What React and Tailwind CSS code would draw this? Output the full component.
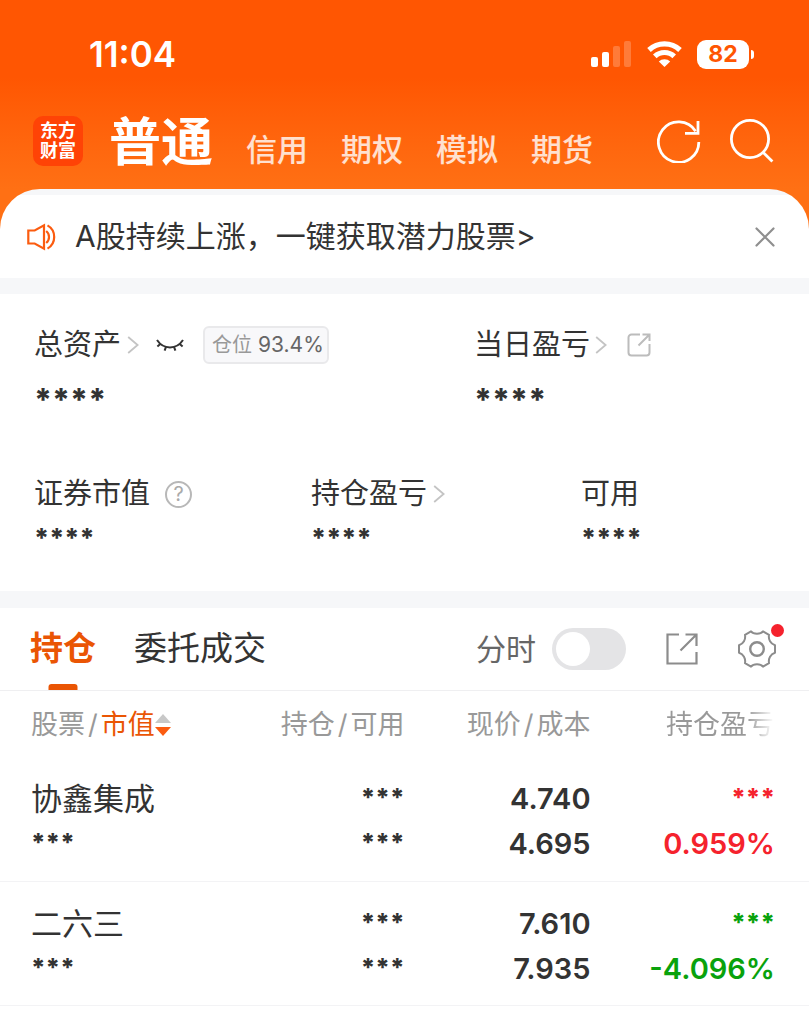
import { useState } from "react";

const ACCOUNT_TABS = ["信用", "期权", "模拟", "期货"];

const HOLDINGS = [
  { name: "协鑫集成", price: "4.740", cost: "4.695", rate: "0.959%", up: true },
  { name: "二六三", price: "7.610", cost: "7.935", rate: "-4.096%", up: false },
];

function SignalIcon() {
  return (
    <svg viewBox="0 0 42 27" className="h-[27px] w-[42px]" fill="#fff" aria-hidden="true">
      <rect x="1" y="16" width="7" height="10" rx="2" />
      <rect x="12" y="11" width="7" height="15" rx="2" />
      <rect x="23" y="5" width="7" height="21" rx="2" opacity=".22" />
      <rect x="34" y="0" width="7" height="26" rx="2" opacity=".22" />
    </svg>
  );
}

function WifiIcon() {
  return (
    <svg viewBox="0 0 35 26" className="h-[26px] w-[35px]" fill="none" stroke="#fff" strokeWidth="5.2" aria-hidden="true">
      <path d="M2 9A22.6 22.6 0 0 1 33 9" />
      <path d="M7.8 15.4A14 14 0 0 1 27.2 15.4" />
      <path d="M17.5 26L11.8 20.6A8 8 0 0 1 23.2 20.6Z" fill="#fff" stroke="none" />
    </svg>
  );
}

function RefreshIcon() {
  return (
    <svg viewBox="0 0 44 44" className="size-[44px]" fill="none" stroke="currentColor" strokeWidth="2.8" aria-hidden="true">
      <path d="M41.8 23A20.2 20.2 0 1 1 38.6 12.2" />
      <path d="M41 2v12.3H28" />
    </svg>
  );
}

function SearchIcon() {
  return (
    <svg viewBox="0 0 44 44" className="size-[44px]" fill="none" stroke="currentColor" strokeWidth="2.8" aria-hidden="true">
      <circle cx="20" cy="20" r="18.6" />
      <path d="M33 33.2l9.4 9.4" />
    </svg>
  );
}

function SpeakerIcon() {
  return (
    <svg viewBox="0 0 30 28" className="h-[28px] w-[30px]" fill="none" stroke="#fb5c10" strokeWidth="2.2" aria-hidden="true">
      <path d="M1.3 7.5h6.4L17 2.4v23.2l-9.3-5.1H1.3z" />
      <path d="M19.2 8a7.8 7.8 0 0 1 0 12" />
      <path d="M20.5 2.4a13.4 13.4 0 0 1 0 23.2" />
    </svg>
  );
}

function CloseIcon() {
  return (
    <svg viewBox="0 0 20 20" className="size-5" fill="none" stroke="#8f8f8f" strokeWidth="2.2" strokeLinecap="round" aria-hidden="true">
      <path d="M1.5 1.5l17 17M18.5 1.5l-17 17" />
    </svg>
  );
}

function ChevronIcon() {
  return (
    <svg viewBox="0 0 12 18" className="h-[18px] w-3" fill="none" stroke="#c4c4c4" strokeWidth="1.8" aria-hidden="true">
      <path d="M1.2 1l9.4 8-9.4 8" />
    </svg>
  );
}

function ClosedEyeIcon() {
  return (
    <svg viewBox="0 0 28 16" className="h-4 w-7" fill="none" stroke="#333" strokeWidth="2" aria-hidden="true">
      <path d="M1 3c3 4.6 7.6 7.4 13 7.4S24 7.6 27 3" />
      <path d="M4.6 6.8L1.4 9.6M10 9.8l-1.4 3.8M18 9.8l1.4 3.8M23.4 6.8l3.2 2.8" />
    </svg>
  );
}

function RoundedShareIcon() {
  return (
    <svg viewBox="0 0 24 24" className="size-6" fill="none" stroke="#bcbcbc" strokeWidth="2" aria-hidden="true">
      <path d="M13 1.5H4.5a3 3 0 0 0-3 3v15a3 3 0 0 0 3 3h15a3 3 0 0 0 3-3V11" />
      <path d="M15.5 1.5h7v6.5M22 2L11.5 12.5" />
    </svg>
  );
}

function ShareIcon() {
  return (
    <svg viewBox="0 0 32 32" className="size-8" fill="none" stroke="#8c8c8c" strokeWidth="2.2" aria-hidden="true">
      <path d="M13 1.5H1.5v29h29V19" />
      <path d="M19.5 1.5h11V13M30 2L14.5 17.5" />
    </svg>
  );
}

function GearIcon() {
  return (
    <svg viewBox="0 0 38 38" className="size-[38px]" fill="none" stroke="#8c8c8c" strokeWidth="2" strokeLinejoin="round" aria-hidden="true">
      <path d="M13 1.4C15.5 4.4 22.5 4.4 25 1.4L31 4.9C30.2 9.5 32.5 13.8 37 15.2V22.8C32.5 24.2 30.2 28.5 31 33.1L25 36.6C22.5 33.6 15.5 33.6 13 36.6L7 33.1C7.8 28.5 5.5 24.2 1 22.8V15.2C5.5 13.8 7.8 9.5 7 4.9Z" />
      <circle cx="19" cy="19" r="6.8" strokeWidth="2.4" />
    </svg>
  );
}

function SortIcon() {
  return (
    <svg viewBox="0 0 16 22" className="h-[22px] w-4" aria-hidden="true">
      <path d="M8 0l8 9H0z" fill="#c8c8c8" />
      <path d="M8 22l8-9H0z" fill="#fb5c10" />
    </svg>
  );
}

function StatusBar() {
  return (
    <div className="flex h-[108px] items-center justify-between pr-[55px] pl-[89px]">
      <span className="text-[35px] font-semibold">11:04</span>
      <div className="flex items-center gap-[15px]">
        <SignalIcon />
        <WifiIcon />
        <div className="flex items-center gap-[2px]">
          <span className="flex h-[29px] w-[52px] items-center justify-center rounded-[9px] bg-white text-[23px] font-bold text-[#ff5602]">
            82
          </span>
          <span className="h-[9px] w-[3px] rounded-r-full bg-white" />
        </div>
      </div>
    </div>
  );
}

function AccountNav() {
  return (
    <div className="flex h-[81px] items-start justify-between pr-[35px] pl-[33px]">
      <div className="flex items-start">
        <span className="mt-2 flex size-[50px] flex-col items-center justify-center rounded-[10px] bg-[#ff4306] text-[18px] leading-[20px] font-bold">
          <span>东方</span>
          <span>财富</span>
        </span>
        <nav className="ml-[26px] flex items-baseline gap-[33px] text-[31px] font-medium text-white/80">
          <a href="#normal" aria-current="page" className="text-[52px] leading-[70px] font-bold text-white">
            普通
          </a>
          {ACCOUNT_TABS.map((tab) => (
            <a key={tab} href={`#${tab}`}>
              {tab}
            </a>
          ))}
        </nav>
      </div>
      <div className="mt-[11px] flex gap-[29px]">
        <button type="button" aria-label="刷新">
          <RefreshIcon />
        </button>
        <button type="button" aria-label="搜索">
          <SearchIcon />
        </button>
      </div>
    </div>
  );
}

function Notice({ onClose }) {
  return (
    <div className="flex h-[89px] items-center rounded-t-[40px] bg-[linear-gradient(#f6f7f9_6px,#fff_6px)] pt-[6px] pr-[34px] pl-[27px]">
      <SpeakerIcon />
      <a href="#notice" className="ml-[18px] flex-1 text-[30px]">
        A股持续上涨，一键获取潜力股票&gt;
      </a>
      <button type="button" aria-label="关闭" onClick={onClose}>
        <CloseIcon />
      </button>
    </div>
  );
}

function Stat({ label, large, children }) {
  return (
    <div>
      <div className="flex h-[44px] items-center text-[29px]">
        <span>{label}</span>
        {children}
      </div>
      <div className={large ? "text-[31px] leading-[66px] font-extrabold" : "text-[26px] leading-[44px] font-extrabold"}>
        ****
      </div>
    </div>
  );
}

function Assets() {
  return (
    <section className="border-t-[16px] border-b-[17px] border-[#f6f7f9] px-[34px] pt-[29px] pb-[31px]">
      <div className="grid grid-cols-[440fr_301fr]">
        <Stat label="总资产" large>
          <span className="ml-[6px]">
            <ChevronIcon />
          </span>
          <button type="button" aria-label="显示金额" className="ml-[17px]">
            <ClosedEyeIcon />
          </button>
          <span className="ml-[19px] flex h-[38px] items-center gap-[6px] rounded-[6px] border-2 border-[#e9e9eb] bg-[#f8f8fa] pr-[3px] pl-[7px] text-[20px] text-[#999]">
            仓位 <span className="text-[21px] text-[#666]">93.4%</span>
          </span>
        </Stat>
        <Stat label="当日盈亏" large>
          <span className="ml-[5px]">
            <ChevronIcon />
          </span>
          <button type="button" aria-label="分享" className="ml-[20px]">
            <RoundedShareIcon />
          </button>
        </Stat>
      </div>
      <div className="mt-[39px] grid grid-cols-[277fr_270fr_194fr]">
        <Stat label="证券市值">
          <button
            type="button"
            aria-label="说明"
            className="ml-[15px] flex size-[27px] items-center justify-center rounded-full border-2 border-[#b8b8b8] text-[20px] text-[#aaa]"
          >
            ?
          </button>
        </Stat>
        <Stat label="持仓盈亏">
          <span className="ml-[6px]">
            <ChevronIcon />
          </span>
        </Stat>
        <Stat label="可用" />
      </div>
    </section>
  );
}

function HoldingsBar() {
  const [minuteChart, setMinuteChart] = useState(false);

  return (
    <div className="flex h-[83px] items-stretch justify-between border-b border-[#efeff1] pr-[33px] pl-[30px]">
      <div className="flex gap-[38px] text-[33px]">
        <button type="button" className="relative font-bold text-[#ea5504]">
          持仓
          <span className="absolute bottom-0 left-1/2 h-[6px] w-[29px] -translate-x-1/2 rounded-t-[3px] bg-[#ea5504]" />
        </button>
        <button type="button">委托成交</button>
      </div>
      <div className="flex items-center">
        <label htmlFor="minute-chart" className="text-[30px] text-[#666]">
          分时
        </label>
        <input
          id="minute-chart"
          type="checkbox"
          role="switch"
          checked={minuteChart}
          onChange={(e) => setMinuteChart(e.target.checked)}
          className="ml-[16px] flex h-[42px] w-[74px] appearance-none items-center rounded-full bg-[#e4e4e6] px-1 before:size-[34px] before:rounded-full before:bg-white checked:justify-end checked:bg-[#ea5504]"
        />
        <button type="button" aria-label="分享持仓" className="ml-[40px]">
          <ShareIcon />
        </button>
        <button type="button" aria-label="设置" className="relative ml-[40px]">
          <GearIcon />
          <span className="absolute -top-[6px] -right-2 size-[13px] rounded-full bg-[#f5222d]" />
        </button>
      </div>
    </div>
  );
}

function Slash() {
  return <span className="mx-[3px]">/</span>;
}

function Masked() {
  return <div className="h-[45px] text-[25px] leading-[42px] font-extrabold">***</div>;
}

function HoldingsTable() {
  return (
    <table className="w-full table-fixed text-right">
      <colgroup>
        <col className="w-[27%]" />
        <col className="w-[23%]" />
        <col className="w-[23%]" />
        <col className="w-[27%]" />
      </colgroup>
      <thead>
        <tr className="h-[66px] text-[27px] whitespace-nowrap text-[#999]">
          <th scope="col" className="pt-[2px] pl-[31px] text-left font-normal">
            <button type="button" className="flex items-center">
              股票
              <Slash />
              <span className="text-[#ea5504]">市值</span>
              <SortIcon />
            </button>
          </th>
          <th scope="col" className="pt-[2px] font-normal">
            持仓
            <Slash />
            可用
          </th>
          <th scope="col" className="pt-[2px] font-normal">
            现价
            <Slash />
            成本
          </th>
          <th scope="col" className="pt-[2px] pr-[35px] font-normal">
            <span className="bg-linear-to-r from-[#999] from-75% to-transparent bg-clip-text text-transparent">持仓盈亏</span>
          </th>
        </tr>
      </thead>
      <tbody className="text-[29px] leading-[45px] font-semibold">
        {HOLDINGS.map((row) => (
          <tr key={row.name} className="h-[124px] border-b border-[#f3f3f5] align-top">
            <td className="pt-[19px] pl-[31px] text-left">
              <div className="text-[31px] font-normal">{row.name}</div>
              <Masked />
            </td>
            <td className="pt-[19px]">
              <Masked />
              <Masked />
            </td>
            <td className="pt-[19px]">
              <div>{row.price}</div>
              <div>{row.cost}</div>
            </td>
            <td className={row.up ? "pt-[19px] pr-[34px] text-[#f5222d]" : "pt-[19px] pr-[34px] text-[#09a20c]"}>
              <Masked />
              <div>{row.rate}</div>
            </td>
          </tr>
        ))}
      </tbody>
    </table>
  );
}

export default function App() {
  const [showNotice, setShowNotice] = useState(true);

  return (
    <div className="min-h-screen bg-white font-['Inter','Noto_Sans_CJK_SC',sans-serif] text-[#333]" lang="zh-CN">
      <div className="bg-linear-to-b from-[#ff5602] from-28% to-[#ff7014] to-68%">
        <header className="text-white">
          <StatusBar />
          <AccountNav />
        </header>
        {showNotice && <Notice onClose={() => setShowNotice(false)} />}
      </div>
      <Assets />
      <HoldingsBar />
      <HoldingsTable />
    </div>
  );
}
